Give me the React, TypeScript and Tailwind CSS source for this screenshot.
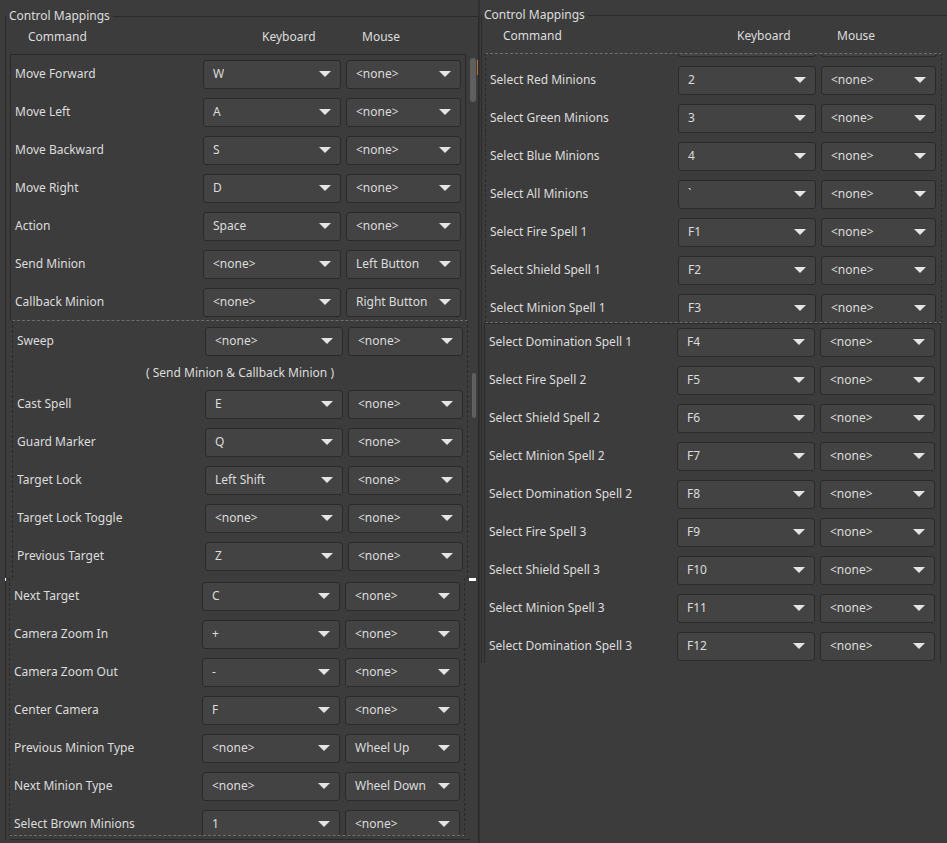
import type { ReactNode } from "react";

type Binding = [string, string, string];

const leftTop: Binding[] = [
  ["Move Forward", "W", "<none>"],
  ["Move Left", "A", "<none>"],
  ["Move Backward", "S", "<none>"],
  ["Move Right", "D", "<none>"],
  ["Action", "Space", "<none>"],
  ["Send Minion", "<none>", "Left Button"],
  ["Callback Minion", "<none>", "Right Button"],
];

const leftMiddle: Binding[] = [
  ["Cast Spell", "E", "<none>"],
  ["Guard Marker", "Q", "<none>"],
  ["Target Lock", "Left Shift", "<none>"],
  ["Target Lock Toggle", "<none>", "<none>"],
  ["Previous Target", "Z", "<none>"],
];

const leftBottom: Binding[] = [
  ["Next Target", "C", "<none>"],
  ["Camera Zoom In", "+", "<none>"],
  ["Camera Zoom Out", "-", "<none>"],
  ["Center Camera", "F", "<none>"],
  ["Previous Minion Type", "<none>", "Wheel Up"],
  ["Next Minion Type", "<none>", "Wheel Down"],
  ["Select Brown Minions", "1", "<none>"],
];

const rightTop: Binding[] = [
  ["Select Red Minions", "2", "<none>"],
  ["Select Green Minions", "3", "<none>"],
  ["Select Blue Minions", "4", "<none>"],
  ["Select All Minions", "`", "<none>"],
  ["Select Fire Spell 1", "F1", "<none>"],
  ["Select Shield Spell 1", "F2", "<none>"],
  ["Select Minion Spell 1", "F3", "<none>"],
];

const rightBottom: Binding[] = [
  ["Select Domination Spell 1", "F4", "<none>"],
  ["Select Fire Spell 2", "F5", "<none>"],
  ["Select Shield Spell 2", "F6", "<none>"],
  ["Select Minion Spell 2", "F7", "<none>"],
  ["Select Domination Spell 2", "F8", "<none>"],
  ["Select Fire Spell 3", "F9", "<none>"],
  ["Select Shield Spell 3", "F10", "<none>"],
  ["Select Minion Spell 3", "F11", "<none>"],
  ["Select Domination Spell 3", "F12", "<none>"],
];

const Combo = ({ value, className }: { value: string; className: string }) => (
  <div
    className={`flex h-[29px] shrink-0 items-center justify-between rounded-[3px] border border-[#2a2a2a] bg-[#434343] pl-[9px] pr-[9px] ${className}`}
  >
    <span className="truncate">{value}</span>
    <svg width="12" height="6" viewBox="0 0 12 6" className="shrink-0">
      <path d="M0 0h12L6 6z" fill="#e4e4e4" />
    </svg>
  </div>
);

const Row = ({ binding }: { binding: Binding }) => (
  <div className="flex h-[38px] shrink-0 items-center pl-[4px]">
    <span className="w-[188px] shrink-0 truncate">{binding[0]}</span>
    <Combo value={binding[1]} className="w-[138px]" />
    <Combo value={binding[2]} className="ml-[5px] w-[115px]" />
  </div>
);

const Header = ({ pad }: { pad: string }) => (
  <div className={`flex h-[26px] items-center ${pad}`}>
    <span className="w-[234px] shrink-0">Command</span>
    <span className="w-[100px] shrink-0">Keyboard</span>
    <span>Mouse</span>
  </div>
);

const GroupBox = ({ children, className, legendPad }: { children: ReactNode; className: string; legendPad: string }) => (
  <fieldset className={`border-t border-l border-[#2a2a2a] ${className}`}>
    <legend className={`leading-[16px] ${legendPad}`}>Control Mappings</legend>
    {children}
  </fieldset>
);

const LeftPanel = () => (
  <div className="relative h-[843px] w-[478px] shrink-0 pl-[5px] pt-[8px]">
    <GroupBox className="w-[473px] border-r" legendPad="pl-[3px] pr-[3px]">
      <Header pad="pl-[22px]" />
      <div className="mt-[4px] flex flex-col">
        <div className="flex">
          <div className="ml-[4px] h-[266px] w-[456px] overflow-hidden border-t border-x border-[#2a2a2a]">
            {leftTop.map((b) => (
              <Row key={b[0]} binding={b} />
            ))}
          </div>
          <div className="flex items-start">
            <div className="ml-[4px] mt-[4px] h-[44px] w-[6px] rounded-full bg-[#5f5f5f]" />
            <div className="ml-[1px] mt-[6px] h-[15px] w-[1px] bg-[#b8742e]" />
          </div>
        </div>
        <div className="flex">
          <div className="ml-[6px] h-[258px] w-[456px] overflow-hidden border-t border-dashed border-x border-[#6e6e6e] border-l-[#2a2a2a] border-r-[#2a2a2a] pt-[1px]">
            <Row binding={["Sweep", "<none>", "<none>"]} />
            <div className="flex h-[25px] items-center justify-center">( Send Minion &amp; Callback Minion )</div>
            {leftMiddle.map((b) => (
              <Row key={b[0]} binding={b} />
            ))}
          </div>
          <div className="ml-[4px] mt-[53px] h-[45px] w-[4px] rounded-full bg-[#5f5f5f]" />
        </div>
        <div className="ml-[3px] h-[258px] w-[456px] overflow-hidden border-b border-dashed border-x border-[#6e6e6e] border-l-[#2a2a2a] border-r-[#2a2a2a]">
          <div className="-mt-[1px]">
            {leftBottom.map((b) => (
              <Row key={b[0]} binding={b} />
            ))}
          </div>
        </div>
        <div className="ml-[4px] mt-[3px] h-[1px] w-[460px] bg-[#2a2a2a]" />
      </div>
    </GroupBox>
    <span className="absolute left-[5px] top-[578px] h-[3px] w-[1px] bg-white" />
    <span className="absolute left-[469px] top-[578px] h-[3px] w-[7px] bg-white" />
  </div>
);

const RightPanel = () => (
  <div className="h-[843px] flex-1 overflow-hidden border-l-2 border-[#303030] pl-[1px] pt-[7px]">
    <GroupBox className="w-[480px]" legendPad="pl-[2px] pr-[3px]">
      <Header pad="pl-[21px]" />
      <div className="mt-[4px] flex flex-col">
        <div className="ml-[3px] h-[270px] w-[457px] overflow-hidden border-y border-dashed border-x border-[#6e6e6e] border-l-[#2a2a2a] border-r-[#2a2a2a]">
          <div className="flex h-[7px] items-start pl-[4px]">
            <div className="ml-[188px] h-[3px] w-[138px] rounded-b-[3px] border-x border-b border-[#2a2a2a] bg-[#434343]" />
            <div className="ml-[5px] h-[3px] w-[116px] rounded-b-[3px] border-x border-b border-[#2a2a2a] bg-[#434343]" />
          </div>
          {rightTop.map((b) => (
            <Row key={b[0]} binding={b} />
          ))}
        </div>
        <div className="ml-[2px] h-[340px] w-[457px] overflow-hidden border-t border-x border-[#2a2a2a]">
          <div className="-mt-[1px]">
            {rightBottom.map((b) => (
              <Row key={b[0]} binding={b} />
            ))}
          </div>
        </div>
      </div>
    </GroupBox>
  </div>
);

export default function App() {
  return (
    <div className="flex h-[843px] w-[947px] overflow-hidden bg-[#3c3c3c] font-['Noto_Sans',sans-serif] text-[12px] leading-[16px] text-[#dcdcdc]">
      <LeftPanel />
      <RightPanel />
    </div>
  );
}
